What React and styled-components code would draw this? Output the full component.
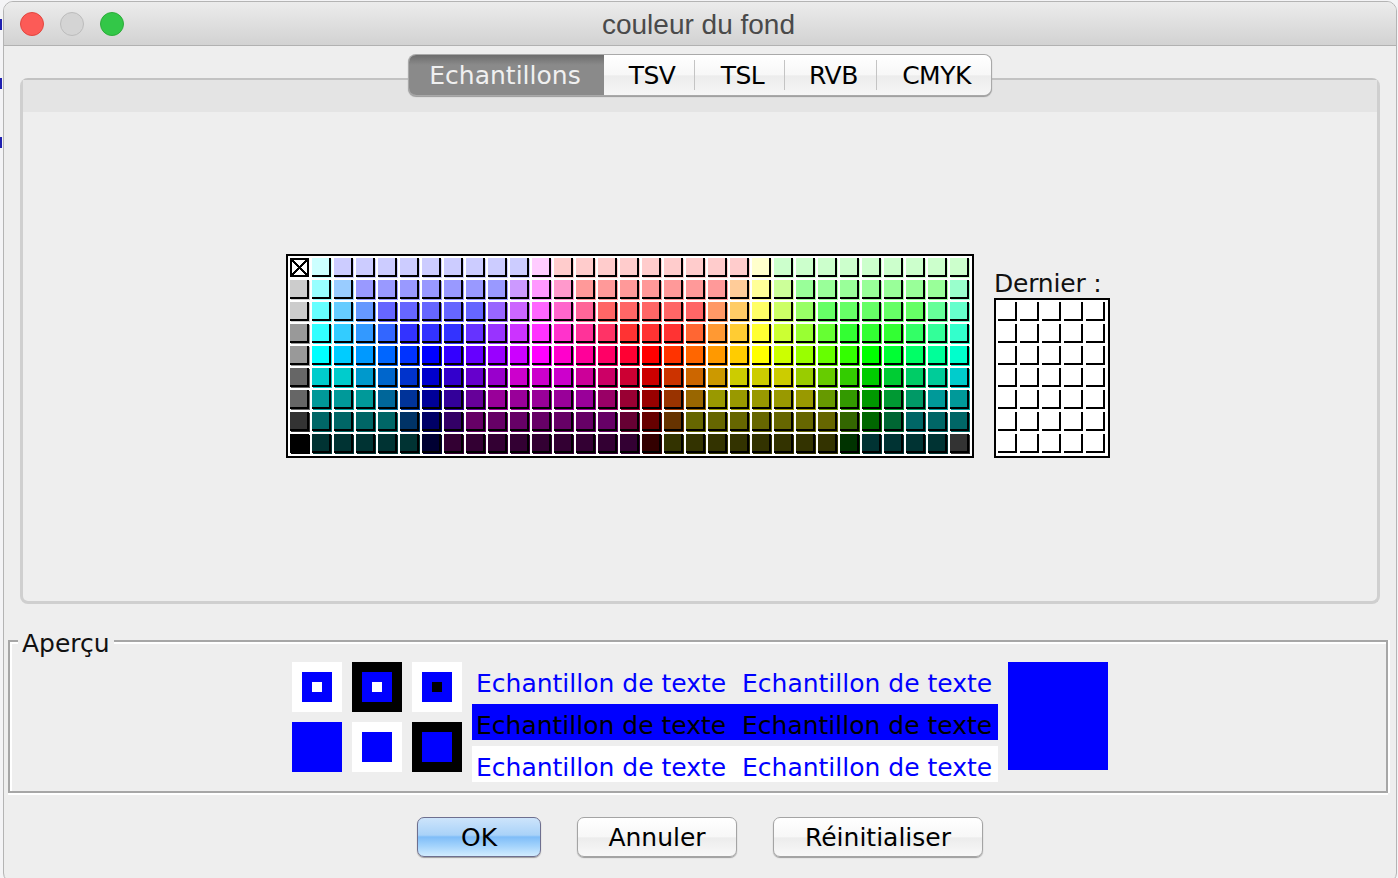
import styled, { createGlobalStyle } from "styled-components"

const GlobalStyle = createGlobalStyle`
    html, body {
        margin: 0;
        height: 878px;
        overflow: hidden;
        background: #f4f4f6;
        font-family: "DejaVu Sans", "Noto Sans", sans-serif;
    }
`

// one string per row, 3 digit hex, "*n" repeats the colour
const PALETTE = [
    "fff cff ccf*9 fcf fcc*9 ffc cfc*9",
    "ccc 9ff 9cf 99f*7 c9f f9f f9c f99*7 fc9 ff9 cf9 9f9*7 9fc",
    "ccc 6ff 6cf 69f 66f*5 96f c6f f6f f6c f69 f66*5 f96 fc6 ff6 cf6 9f6 6f6*5 6f9 6fc",
    "999 3ff 3cf 39f 36f 33f*3 63f 93f c3f f3f f3c f39 f36 f33*3 f63 f93 fc3 ff3 cf3 9f3 6f3 3f3*3 3f6 3f9 3fc",
    "999 0ff 0cf 09f 06f 03f 00f 30f 60f 90f c0f f0f f0c f09 f06 f03 f00 f30 f60 f90 fc0 ff0 cf0 9f0 6f0 3f0 0f0 0f3 0f6 0f9 0fc",
    "666 0cc*2 09c 06c 03c 00c 30c 60c 90c c0c*3 c09 c06 c03 c00 c30 c60 c90 cc0*3 9c0 6c0 3c0 0c0 0c3 0c6 0c9 0cc",
    "666 099*3 069 039 009 309 609 909*5 906 903 900 930 960 990*5 690 390 090 093 096 099*2",
    "333 066*4 036 006 306 606*7 603 600 630 660*7 360 060 063 066*3",
    "000 033*5 003 303*9 300 330*8 030 033*4 333",
]

const expand = (row) =>
    row.split(" ").flatMap((item) => {
        const [hex, count] = item.split("*")
        return Array(Number(count || 1)).fill("#" + hex)
    })

const SAMPLE = "Echantillon de texte"

export default function App() {
    return (
        <>
            <GlobalStyle />
            <Desktop>
                <BehindMark $top={19} />
                <BehindMark $top={78} />
                <BehindMark $top={137} />
                <Window>
                    <TitleBar>
                        <Lights>
                            <Light $fill="#fc5b57" $edge="#e2463f" />
                            <Light $fill="#d4d4d4" $edge="#bcbcbc" />
                            <Light $fill="#33c748" $edge="#2dac3a" />
                        </Lights>
                        <Title>couleur du fond</Title>
                    </TitleBar>
                    <Content>
                        <Tabs>
                            <Tab $width={195} $selected>Echantillons</Tab>
                            <Tab $width={91}>TSV</Tab>
                            <Tab $width={90}>TSL</Tab>
                            <Tab $width={92}>RVB</Tab>
                            <Tab $width={114} $last>CMYK</Tab>
                        </Tabs>
                        <TabPanel>
                            <TabStrip />
                            <PanelBody>
                                <Palette>
                                    {PALETTE.flatMap((row, r) =>
                                        expand(row).map((color, c) =>
                                            r === 0 && c === 0 ? (
                                                <CurrentSwatch key="current">
                                                    <svg width="19" height="19" viewBox="0 0 19 19" shapeRendering="crispEdges">
                                                        <rect x="1" y="1" width="17" height="17" fill="#fff" stroke="#000" strokeWidth="2" />
                                                        <path d="M2 2L17 17M17 2L2 17" stroke="#000" strokeWidth="2" fill="none" />
                                                    </svg>
                                                </CurrentSwatch>
                                            ) : (
                                                <Swatch key={r + "-" + c} style={{ color }} />
                                            )
                                        )
                                    )}
                                </Palette>
                                <RecentColumn>
                                    <RecentLabel>Dernier :</RecentLabel>
                                    <Recent>
                                        {Array.from({ length: 35 }, (_, i) => (
                                            <RecentSwatch key={i} />
                                        ))}
                                    </Recent>
                                </RecentColumn>
                            </PanelBody>
                        </TabPanel>
                        <PreviewFrame>
                            <PreviewLegend>Aperçu</PreviewLegend>
                            <SquareGrid>
                                <Square $bg="#fff"><Ring><Dot $bg="#fff" /></Ring></Square>
                                <Square $bg="#000"><Ring><Dot $bg="#fff" /></Ring></Square>
                                <Square $bg="#fff"><Ring><Dot $bg="#000" /></Ring></Square>
                                <Square $bg="#00f" />
                                <Square $bg="#fff"><Ring /></Square>
                                <Square $bg="#000"><Ring /></Square>
                            </SquareGrid>
                            <SampleRows>
                                <SampleRow $bg="transparent" $fg="#00f">
                                    <SampleCell>{SAMPLE}</SampleCell>
                                    <SampleCell>{SAMPLE}</SampleCell>
                                </SampleRow>
                                <SampleRow $bg="#00f" $fg="#000">
                                    <SampleCell>{SAMPLE}</SampleCell>
                                    <SampleCell>{SAMPLE}</SampleCell>
                                </SampleRow>
                                <SampleRow $bg="#fff" $fg="#00f">
                                    <SampleCell>{SAMPLE}</SampleCell>
                                    <SampleCell>{SAMPLE}</SampleCell>
                                </SampleRow>
                            </SampleRows>
                            <BigSample />
                        </PreviewFrame>
                        <Buttons>
                            <Button $width={124} $primary>OK</Button>
                            <Button $width={160}>Annuler</Button>
                            <Button $width={210}>Réinitialiser</Button>
                        </Buttons>
                    </Content>
                </Window>
            </Desktop>
        </>
    )
}

const Desktop = styled.div`
    position: relative;
    height: 878px;
    padding: 1px 1px 0 3px;
    box-sizing: border-box;
    overflow: hidden;
`

const BehindMark = styled.div`
    position: absolute;
    left: 0;
    top: ${props => props.$top}px;
    width: 2px;
    height: 11px;
    background: #2020b0;
`

const Window = styled.div`
    position: relative;
    height: 882px;
    background: #eeeeee;
    border: 1px solid #b4b4b4;
    border-radius: 10px;
    box-sizing: border-box;
    overflow: hidden;
`

const TitleBar = styled.div`
    position: relative;
    height: 43px;
    display: flex;
    align-items: center;
    justify-content: center;
    background: linear-gradient(#ececec, #d2d2d2);
    border-bottom: 1px solid #b1b1b1;
`

const Lights = styled.div`
    position: absolute;
    left: 16px;
    top: 10px;
    display: flex;
    gap: 16px;
`

const Light = styled.div`
    width: 24px;
    height: 24px;
    box-sizing: border-box;
    border-radius: 50%;
    background: ${props => props.$fill};
    border: 1px solid ${props => props.$edge};
`

const Title = styled.div`
    font-family: "Liberation Sans", sans-serif;
    font-size: 28px;
    color: #4a4a4a;
    padding: 2px 3px 0 0;
`

const Content = styled.div`
    display: flex;
    flex-direction: column;
    padding: 9px 6px 0 4px;
`

const Tabs = styled.div`
    position: relative;
    z-index: 1;
    align-self: center;
    display: flex;
    height: 40px;
    margin-left: 2px;
    box-sizing: border-box;
    border-radius: 7px;
    overflow: hidden;
    box-shadow: 0 0 0 1px #a9a9a9, 0 1px 1px 1px #9a9a9a;
`

const Tab = styled.div`
    width: ${props => props.$width}px;
    box-sizing: border-box;
    padding: ${props => props.$selected ? "0 3px 0 0" : "0 0 0 5px"};
    display: flex;
    align-items: center;
    justify-content: center;
    font-size: 25px;
    letter-spacing: ${props => props.$selected ? 0 : -0.5}px;
    position: relative;
    color: ${props => props.$selected ? "#f0f0f0" : "#000"};
    background: ${props => props.$selected
        ? "linear-gradient(#6d6d6d, #8a8a8a 25%, #8a8a8a)"
        : "linear-gradient(#fff, #f7f7f7 50%, #ececec 52%, #f6f6f6)"};
    &::after {
        content: "";
        display: ${props => props.$selected || props.$last ? "none" : "block"};
        position: absolute;
        right: 0;
        top: 5px;
        bottom: 5px;
        width: 1px;
        background: #c4c4c4;
    }
`

const TabPanel = styled.div`
    margin: -17px 10px 0 12px;
    height: 526px;
    display: flex;
    flex-direction: column;
    box-sizing: border-box;
    border: 3px solid #cfcfcf;
    border-top: 2px solid #c2c2c2;
    border-radius: 8px;
`

const TabStrip = styled.div`
    height: 32px;
    background: #e4e4e4;
`

const PanelBody = styled.div`
    flex: 1;
    display: flex;
    align-items: flex-end;
    justify-content: center;
    padding: 0 4px 143px 0;
    gap: 20px;
`

const Palette = styled.div`
    display: grid;
    grid-template-columns: repeat(31, 20px);
    grid-auto-rows: 20px;
    gap: 2px;
    padding: 2px;
    background: #fff;
    border: 2px solid #000;
`

const Swatch = styled.div`
    width: 19px;
    height: 19px;
    box-sizing: border-box;
    background: currentColor;
    border-right: 2px solid #000;
    border-bottom: 2px solid #000;
    box-shadow: 1px 1px 0 currentColor;
`

const CurrentSwatch = styled.div`
    width: 19px;
    height: 19px;
    line-height: 0;
`

const RecentColumn = styled.div`
    display: flex;
    flex-direction: column;
`

const RecentLabel = styled.div`
    font-size: 25px;
    letter-spacing: -0.2px;
    line-height: 28px;
    color: #111;
`

const Recent = styled.div`
    display: grid;
    grid-template-columns: repeat(5, 20px);
    grid-auto-rows: 20px;
    gap: 2px;
    padding: 2px;
    background: #fff;
    border: 2px solid #000;
`

const RecentSwatch = styled.div`
    width: 19px;
    height: 19px;
    box-sizing: border-box;
    background: #fff;
    border-right: 2px solid #000;
    border-bottom: 2px solid #000;
`

const PreviewFrame = styled.div`
    position: relative;
    margin: 36px 2px 0 0;
    height: 153px;
    box-sizing: border-box;
    display: flex;
    justify-content: center;
    gap: 10px;
    padding: 20px 0 0 4px;
    border: 2px solid #a6a6a6;
    box-shadow: inset 2px 2px 0 #fff, 0 2px 0 #fff, 2px 0 0 #fff;
`

const PreviewLegend = styled.div`
    position: absolute;
    left: 8px;
    top: -13px;
    padding: 0 4px;
    background: #eeeeee;
    font-size: 25px;
    line-height: 30px;
    color: #111;
`

const SquareGrid = styled.div`
    display: grid;
    grid-template-columns: repeat(3, 50px);
    grid-auto-rows: 50px;
    gap: 10px;
`

const Square = styled.div`
    display: flex;
    align-items: center;
    justify-content: center;
    background: ${props => props.$bg};
`

const Ring = styled.div`
    width: 30px;
    height: 30px;
    display: flex;
    align-items: center;
    justify-content: center;
    background: #00f;
`

const Dot = styled.div`
    width: 10px;
    height: 10px;
    background: ${props => props.$bg};
`

const SampleRows = styled.div`
    display: flex;
    flex-direction: column;
    gap: 6px;
`

const SampleRow = styled.div`
    display: grid;
    grid-template-columns: 266px 260px;
    height: 36px;
    align-items: center;
    background: ${props => props.$bg};
    color: ${props => props.$fg};
`

const SampleCell = styled.div`
    padding: 6px 0 0 4px;
    font-size: 25px;
    white-space: nowrap;
`

const BigSample = styled.div`
    width: 100px;
    height: 108px;
    background: #00f;
`

const Buttons = styled.div`
    display: flex;
    justify-content: center;
    gap: 36px;
    margin: 24px 0 0 2px;
`

const Button = styled.div`
    width: ${props => props.$width}px;
    height: 40px;
    box-sizing: border-box;
    display: flex;
    align-items: center;
    justify-content: center;
    font-size: 25px;
    color: #000;
    border-radius: 7px;
    border: 1px solid ${props => props.$primary ? "#6e6f8f" : "#a4a4a4"};
    box-shadow: 0 1px 1px #9c9c9c;
    background: ${props => props.$primary
        ? "linear-gradient(#cde4fb, #a9d2f8 45%, #7fbdf8 50%, #a5d4fc 75%, #d2ecfe)"
        : "linear-gradient(#fff, #f7f7f7 50%, #ececec 52%, #f8f8f8)"};
`
